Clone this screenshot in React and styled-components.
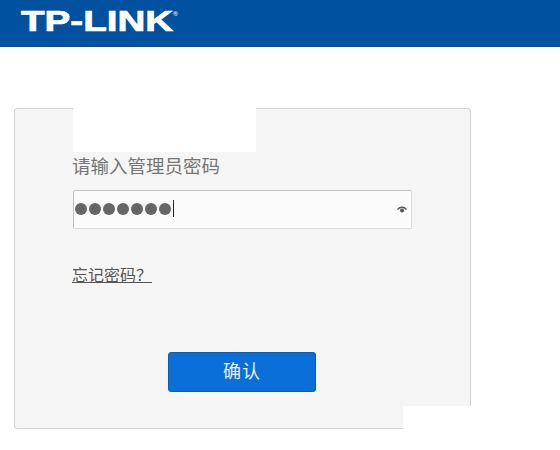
import React from 'react';
import styled, { createGlobalStyle } from 'styled-components';

const GlobalStyle = createGlobalStyle`
  body {
    margin: 0;
    background: #fff;
    font-family: "Noto Sans CJK SC", "Liberation Sans", sans-serif;
  }
`;

const Header = styled.header`
  height: 47px;
  background: #00519f;
  display: flex;
  align-items: flex-start;
  padding-left: 21px;
`;

const Logo = styled.div`
  font-family: "Liberation Sans", Arial, sans-serif;
  font-weight: 700;
  font-size: 29px;
  line-height: 22px;
  margin-top: 10px;
  color: #fff;
  -webkit-text-stroke: 0.7px #fff;
  transform: scaleX(1.33);
  transform-origin: left center;
  white-space: nowrap;
  display: flex;
  align-items: flex-start;
`;

const Reg = styled.span`
  font-size: 5px;
  line-height: 8px;
  -webkit-text-stroke: 0;
  color: #dfe8f2;
`;

const Panel = styled.main`
  position: relative;
  box-sizing: border-box;
  width: 457px;
  height: 321px;
  margin: 61px 0 0 14px;
  padding: 41px 0 0 57px;
  background: #f5f5f5;
  border: 1px solid #d4d4d4;
  border-radius: 3px;
  display: flex;
  flex-direction: column;
  align-items: flex-start;
`;

const Patch = styled.div`
  position: absolute;
  background: #fff;
  ${p => p.$top ? 'left: 58px; top: -1px; width: 183px; height: 44px;'
                : 'right: -2px; bottom: -2px; width: 69px; height: 24px;'}
`;

const Label = styled.label`
  font-size: 18.5px;
  line-height: 30px;
  color: #757575;
`;

const Field = styled.div`
  box-sizing: border-box;
  width: 339px;
  height: 39px;
  margin: 10px 0 0 1px;
  padding: 0 4px 0 1px;
  background: #fbfbfb;
  border: 1px solid #dcdcdc;
  border-top-color: #c4c4c4;
  border-left-color: #bdbdbd;
  border-radius: 2px;
  display: flex;
  align-items: center;
`;

const Dots = styled.div`
  display: flex;
  gap: 2px;
  margin-bottom: 2px;
`;

const Dot = styled.span`
  width: 12px;
  height: 12px;
  border-radius: 50%;
  background: #666;
`;

const Caret = styled.span`
  width: 1px;
  height: 17px;
  margin: 0 0 2px 2px;
  background: #222;
`;

const Eye = styled.svg`
  width: 10px;
  height: 7px;
  margin-left: auto;
  color: #555;
`;

const Forgot = styled.a`
  font-size: 16px;
  line-height: 22px;
  margin-top: 34px;
  color: #555;
  text-decoration: underline;
  cursor: pointer;
`;

const Submit = styled.button`
  box-sizing: border-box;
  width: 148px;
  height: 40px;
  margin: 67px 0 0 96px;
  padding: 0 0 4px;
  background: #0a6fd8;
  border: 1px solid #0a5cb0;
  border-radius: 3px;
  color: #e8f2fc;
  font-family: inherit;
  font-size: 18px;
  letter-spacing: 1px;
  cursor: pointer;
`;

export default function App() {
  return (
    <>
      <GlobalStyle />
      <Header>
        <Logo>TP-LINK<Reg>®</Reg></Logo>
      </Header>
      <Panel>
        <Patch $top />
        <Label>请输入管理员密码</Label>
        <Field>
          <Dots>
            {[...Array(7)].map((_, i) => <Dot key={i} />)}
          </Dots>
          <Caret />
          <Eye viewBox="0 0 10 7">
            <path d="M0.5 3.5 C3 0.5 7 0.5 9.5 3.5" fill="none" stroke="currentColor" strokeWidth="1.3" />
            <circle cx="5" cy="4.5" r="2" fill="currentColor" />
          </Eye>
        </Field>
        <Forgot>忘记密码？</Forgot>
        <Submit>确认</Submit>
        <Patch />
      </Panel>
    </>
  );
}
